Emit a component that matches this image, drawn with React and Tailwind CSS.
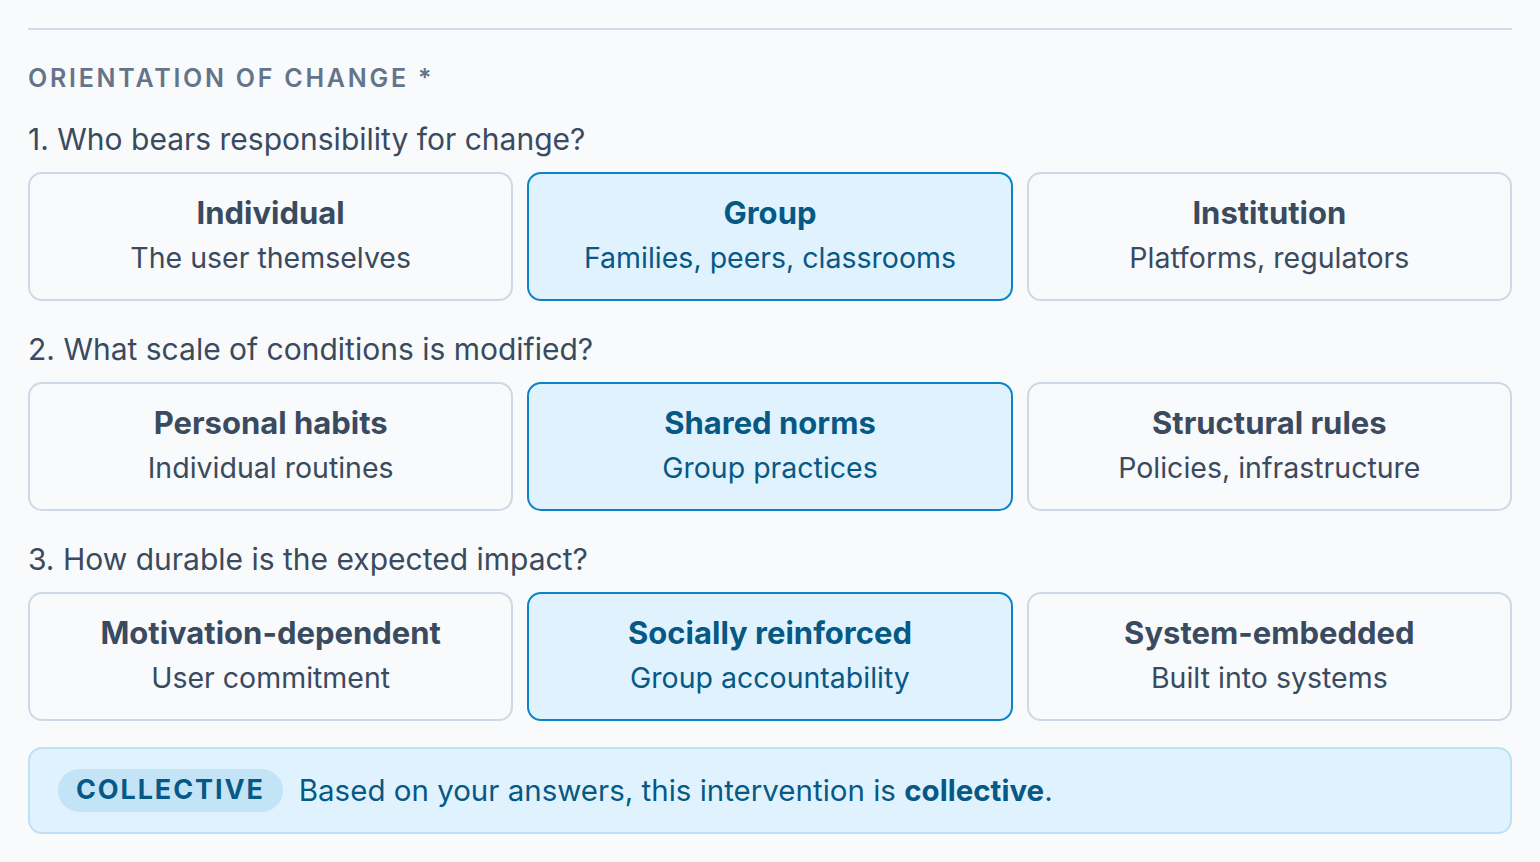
import React from "react";

const questions = [
  {
    label: "1. Who bears responsibility for change?",
    selected: 1,
    options: [
      { title: "Individual", sub: "The user themselves" },
      { title: "Group", sub: "Families, peers, classrooms" },
      { title: "Institution", sub: "Platforms, regulators" },
    ],
  },
  {
    label: "2. What scale of conditions is modified?",
    selected: 1,
    options: [
      { title: "Personal habits", sub: "Individual routines" },
      { title: "Shared norms", sub: "Group practices" },
      { title: "Structural rules", sub: "Policies, infrastructure" },
    ],
  },
  {
    label: "3. How durable is the expected impact?",
    selected: 1,
    options: [
      { title: "Motivation-dependent", sub: "User commitment" },
      { title: "Socially reinforced", sub: "Group accountability" },
      { title: "System-embedded", sub: "Built into systems" },
    ],
  },
];

const OptionCard = ({ title, sub, active }) => (
  <button
    type="button"
    className={
      active
        ? "h-[129px] flex flex-col items-center justify-center pb-[3px] rounded-[14px] border-2 border-[#0a84c6] bg-[#e0f2fe] text-[#075985]"
        : "h-[129px] flex flex-col items-center justify-center pb-[3px] rounded-[14px] border-2 border-[#cfd9e5] bg-[#f8fafc] text-[#3a4a5f]"
    }
  >
    <span className="text-[31px] font-bold leading-[40px]">{title}</span>
    <span className="text-[28.5px] leading-[40px] mt-[5px]">{sub}</span>
  </button>
);

export default function App() {
  return (
    <div
      className="min-h-screen bg-[#f8fafc] px-[28px] pt-[28px]"
      style={{ fontFamily: "Inter, 'Noto Sans', sans-serif" }}
    >
      <div className="border-t-2 border-[#d3dce7]" />

      {/* heading */}
      <h2 className="mt-[32px] text-[25px] leading-[32px] font-semibold tracking-[0.11em] text-[#64748b]">
        ORIENTATION OF CHANGE *
      </h2>

      {questions.map((q, qi) => (
        <div key={qi} className={qi === 0 ? "mt-[27px]" : "mt-[30px]"}>
          <p className="text-[30px] leading-[36px] text-[#3a4a5f]">{q.label}</p>
          <div className="mt-[15px] grid grid-cols-3 gap-[14px]">
            {q.options.map((o, oi) => (
              <OptionCard key={oi} title={o.title} sub={o.sub} active={oi === q.selected} />
            ))}
          </div>
        </div>
      ))}

      {/* result */}
      <div className="mt-[26px] h-[87px] flex items-center rounded-[14px] border-2 border-[#bde0f5] bg-[#e0f2fe] pl-[28px]">
        <span className="h-[43px] flex items-center rounded-full bg-[#c3e3f7] px-[18px] text-[27px] font-bold tracking-[0.07em] text-[#075985]">
          COLLECTIVE
        </span>
        <span className="ml-[16px] text-[29.5px] text-[#075985]">
          Based on your answers, this intervention is <b className="font-bold">collective</b>.
        </span>
      </div>
    </div>
  );
}
